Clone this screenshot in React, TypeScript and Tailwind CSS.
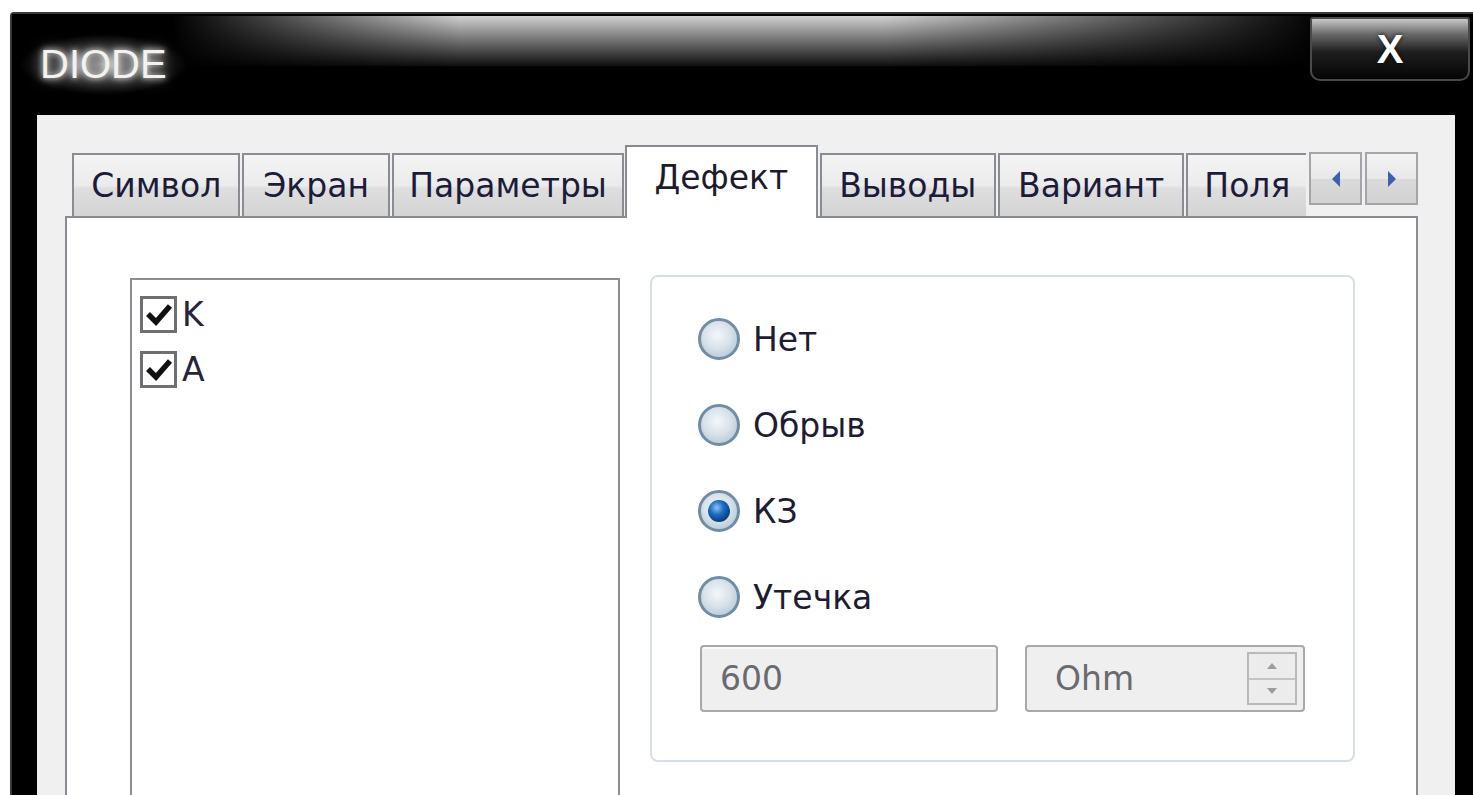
import React from 'react';

type Tab = { label: string; w: string; active?: boolean };

const tabs: Tab[] = [
  { label: 'Символ', w: 'w-[169px] mr-[2px]' },
  { label: 'Экран', w: 'w-[148px] mr-[2px]' },
  { label: 'Параметры', w: 'w-[233px] mr-[1px]' },
  { label: 'Дефект', w: 'w-[193px] mr-[2px]', active: true },
  { label: 'Выводы', w: 'w-[177px] mr-[2px]' },
  { label: 'Вариант', w: 'w-[187px] mr-[2px]' },
];

function Checkbox({ label }: { label: string }) {
  return (
    <div className="flex items-center h-[38px] mb-[17px]">
      <div className="w-[37px] h-[37px] border-[3px] border-[#6d6f73] bg-white flex items-center justify-center">
        <svg width="28" height="24" viewBox="0 0 28 24">
          <path d="M3 12 L11 20 L25 4" fill="none" stroke="#111" strokeWidth="5.5" strokeLinejoin="miter" />
        </svg>
      </div>
      <span className="ml-[5px] text-[33px] leading-none text-[#26243a]">{label}</span>
    </div>
  );
}

function Radio({ label, checked }: { label: string; checked?: boolean }) {
  return (
    <div className="flex items-center h-[86px]">
      <div className="w-[42px] h-[42px] rounded-full border-[3px] border-[#6f8ea6] bg-[radial-gradient(circle_at_45%_40%,#f4f7f9_0%,#d8e2ea_45%,#a6bccd_100%)] flex items-center justify-center">
        {checked && (
          <div className="w-[22px] h-[22px] rounded-full bg-[radial-gradient(circle_at_40%_35%,#8cc4f2_0%,#1f6ec4_35%,#0a3f86_70%,#072a5c_100%)]" />
        )}
      </div>
      <span className="ml-[13px] text-[33px] leading-none text-[#1e1c33]">{label}</span>
    </div>
  );
}

function Arrow({ dir }: { dir: 'left' | 'right' }) {
  return (
    <div className="w-[53px] h-[53px] border-2 border-[#a3a5aa] bg-[linear-gradient(#f3f3f3,#e8e8e8_50%,#dadada_52%,#d2d2d2)] flex items-center justify-center">
      <svg width="12" height="20" viewBox="0 0 12 20">
        {dir === 'left' ? (
          <polygon points="10,2 2,10 10,18" fill="#3f5fb0" />
        ) : (
          <polygon points="2,2 10,10 2,18" fill="#3f5fb0" />
        )}
      </svg>
    </div>
  );
}

export default function App() {
  return (
    <div className="w-[1473px] h-[795px] overflow-hidden bg-white font-['DejaVu_Sans',sans-serif]">
      <div className="ml-[10px] mt-[12px] w-[1463px] bg-black flex flex-col border-t-2 border-l-2 border-[#3a3a3a] rounded-tl-[4px]">
        {/* title bar */}
        <div className="relative shrink-0 h-[101px] flex items-start justify-between bg-black">
          <div className="absolute left-[160px] right-[150px] top-[2px] h-[50px] bg-[linear-gradient(rgba(255,255,255,0.82),rgba(255,255,255,0.4)_55%,rgba(255,255,255,0.06))] [mask-image:linear-gradient(to_right,transparent,black_25%,black_62%,transparent)]" />
          <div className="relative ml-[8px] mt-[20px] px-[20px] py-[10px] rounded-[30px] bg-[radial-gradient(ellipse_closest-side,rgba(190,190,190,0.75),rgba(120,120,120,0.35)_60%,rgba(0,0,0,0))]">
            <span className="text-[40px] leading-none text-[#f2f2ee] [text-shadow:0_0_6px_rgba(255,255,255,0.9),0_0_14px_rgba(255,255,255,0.6)] font-['Liberation_Sans',sans-serif]">
              DIODE
            </span>
          </div>
          <div className="relative mr-[3px] mt-[3px] w-[160px] h-[64px] rounded-b-[10px] rounded-t-[3px] border-2 border-[#4a4a4a] bg-[linear-gradient(#c8c8c8,#6a6a6a_25%,#1e1e1e_55%,#050505)] flex items-center justify-center">
            <span className="text-[40px] leading-none font-bold text-white font-['Liberation_Sans',sans-serif] [text-shadow:0_0_4px_rgba(0,0,0,0.8)]">
              X
            </span>
          </div>
        </div>

        {/* client area */}
        <div className="flex shrink-0">
          <div className="w-[25px] bg-black" />
          <div className="w-[1418px] bg-[#f0f0f0] pt-[30px] pl-[28px] pr-[37px]">
            {/* tab strip */}
            <div className="relative z-10 flex items-end pl-[7px] h-[71px]">
              {tabs.map((t) =>
                t.active ? (
                  <div
                    key={t.label}
                    className={`${t.w} h-[73px] -mb-[2px] border-2 border-b-0 border-[#898c93] bg-white flex justify-center pt-[14px] text-[33px] leading-none text-[#1c1b2c]`}
                  >
                    {t.label}
                  </div>
                ) : (
                  <div
                    key={t.label}
                    className={`${t.w} h-[63px] border-2 border-b-0 border-[#898c93] bg-[linear-gradient(#f4f4f4,#ebebeb_50%,#dedede_55%,#d4d4d4)] flex items-center justify-center text-[33px] leading-none text-[#1c1b3a]`}
                  >
                    {t.label}
                  </div>
                ),
              )}
              <div className="w-[120px] h-[63px] border-2 border-b-0 border-r-0 border-[#898c93] bg-[linear-gradient(#f4f4f4,#ebebeb_50%,#dedede_55%,#d4d4d4)] flex items-center pl-[16px] text-[33px] leading-none text-[#1c1b3a] whitespace-nowrap">
                Поля
              </div>
              <div className="self-start mt-[7px] ml-[3px] flex gap-[3px]">
                <Arrow dir="left" />
                <Arrow dir="right" />
              </div>
            </div>

            {/* tab page */}
            <div className="h-[620px] border-2 border-[#898c93] bg-white pt-[60px] pl-[63px] flex items-start">
              <div className="w-[490px] h-[600px] border-2 border-[#8b8f95] bg-white pt-[15px] pl-[8px]">
                <Checkbox label="K" />
                <Checkbox label="A" />
              </div>

              <div className="ml-[30px] -mt-[3px] w-[705px] rounded-[8px] border-2 border-[#d6dfe6] pt-[19px] pl-[46px] pb-[48px]">
                <Radio label="Нет" />
                <Radio label="Обрыв" />
                <Radio label="КЗ" checked />
                <Radio label="Утечка" />
                <div className="mt-[5px] ml-[2px] flex gap-[27px]">
                  <div className="w-[298px] h-[67px] rounded-[4px] border-2 border-[#a7a9ac] bg-[#efefef] shadow-[inset_0_2px_0_#fafafa] flex items-center pl-[18px] text-[33px] leading-none text-[#6a6a70]">
                    600
                  </div>
                  <div className="w-[280px] h-[67px] rounded-[4px] border-2 border-[#a7a9ac] bg-[#efefef] flex items-center justify-between pl-[28px] pr-[6px] text-[33px] leading-none text-[#6a6a70]">
                    <span>Ohm</span>
                    <div className="w-[50px] h-[53px] border-2 border-[#b7b9bc] bg-[#ececec] flex flex-col">
                      <div className="flex-1 flex items-center justify-center border-b-2 border-[#c2c4c7]">
                        <svg width="12" height="8" viewBox="0 0 12 8">
                          <polygon points="6,1 11,7 1,7" fill="#9a9ca0" />
                        </svg>
                      </div>
                      <div className="flex-1 flex items-center justify-center">
                        <svg width="12" height="8" viewBox="0 0 12 8">
                          <polygon points="1,1 11,1 6,7" fill="#9a9ca0" />
                        </svg>
                      </div>
                    </div>
                  </div>
                </div>
              </div>
            </div>
          </div>
          <div className="flex-1 bg-black" />
        </div>
      </div>
    </div>
  );
}
